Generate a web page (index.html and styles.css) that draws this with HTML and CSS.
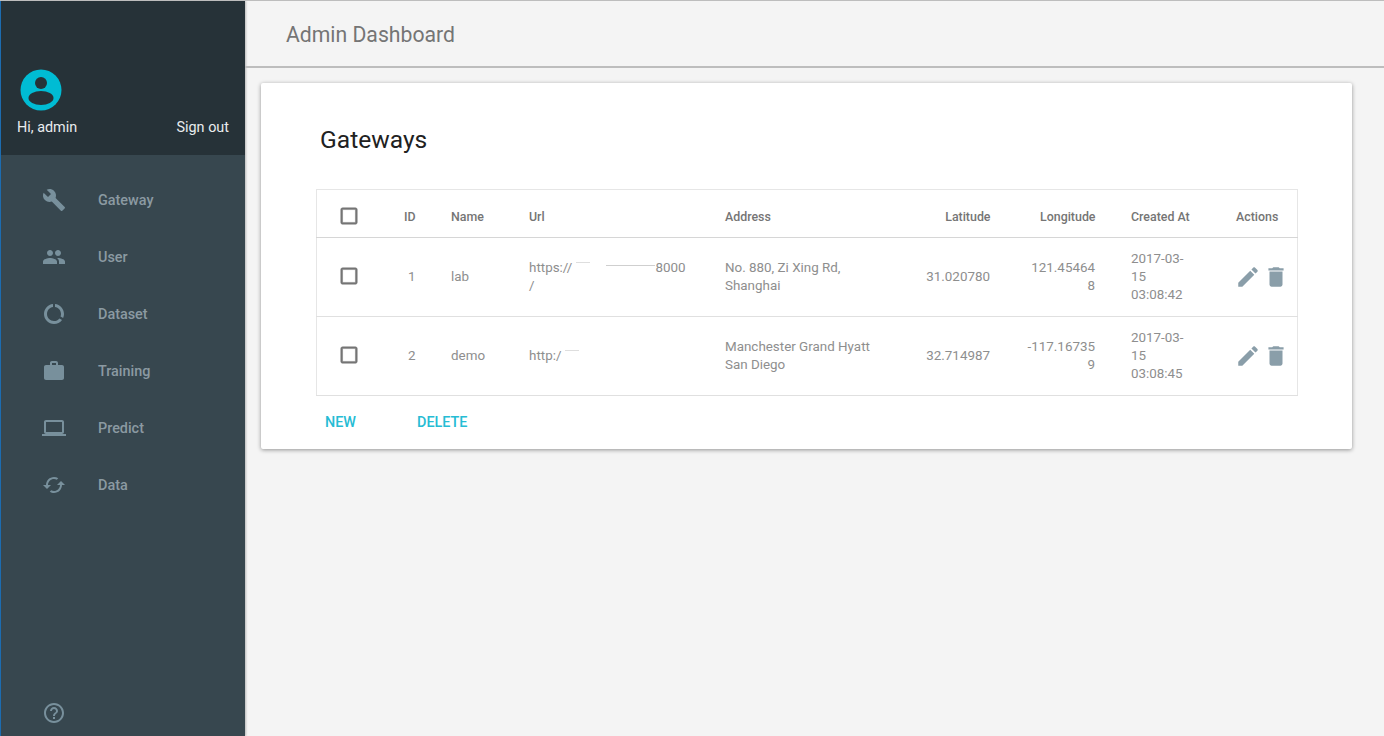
FILE: index.html
```html
<!DOCTYPE html>
<html lang="en">
<head>
    <meta charset="UTF-8">
    <meta name="viewport" content="width=device-width, initial-scale=1.0">
    <title>Admin Dashboard</title>
    <link rel="stylesheet" href="styles.css">
</head>
<body>
    <!-- Sidebar -->
    <aside class="sidebar">
        <div class="profile">
            <svg class="avatar" viewBox="0 0 42 42">
                <circle cx="21" cy="21" r="20.5" fill="#00bcd4"/>
                <circle cx="21" cy="14" r="6" fill="#263238"/>
                <ellipse cx="21" cy="29" rx="12.5" ry="7" fill="#263238"/>
            </svg>
            <div class="profile-row">
                <span>Hi, admin</span>
                <span>Sign out</span>
            </div>
        </div>

        <nav class="nav">
            <a class="nav-item">
                <svg class="nav-icon" viewBox="0 0 24 24"><path d="M22.7 19l-9.1-9.1c.9-2.3.4-5-1.5-6.9-2-2-5-2.4-7.4-1.3L9 6 6 9 1.6 4.7C.4 7.1.9 10.1 2.9 12.1c1.9 1.9 4.6 2.4 6.9 1.5l9.1 9.1c.4.4 1 .4 1.4 0l2.3-2.3c.5-.4.5-1.1.1-1.4z"/></svg>
                <span>Gateway</span>
            </a>
            <a class="nav-item">
                <svg class="nav-icon" viewBox="0 0 24 24"><path d="M16 11c1.66 0 2.99-1.34 2.99-3S17.66 5 16 5c-1.66 0-3 1.34-3 3s1.34 3 3 3zm-8 0c1.66 0 2.99-1.34 2.99-3S9.66 5 8 5C6.34 5 5 6.34 5 8s1.34 3 3 3zm0 2c-2.33 0-7 1.17-7 3.5V19h14v-2.5c0-2.33-4.67-3.5-7-3.5zm8 0c-.29 0-.62.02-.97.05 1.16.84 1.97 1.97 1.97 3.45V19h6v-2.5c0-2.33-4.67-3.5-7-3.5z"/></svg>
                <span>User</span>
            </a>
            <a class="nav-item">
                <svg class="nav-icon" viewBox="0 0 24 24"><path d="M13 2.05v3.03c3.39.49 6 3.39 6 6.92 0 .9-.18 1.75-.48 2.54l2.6 1.53c.56-1.24.88-2.62.88-4.07 0-5.18-3.95-9.45-9-9.95zM12 19c-3.87 0-7-3.13-7-7 0-3.53 2.61-6.43 6-6.92V2.05c-5.06.5-9 4.76-9 9.95 0 5.52 4.47 10 9.99 10 3.31 0 6.24-1.61 8.06-4.09l-2.6-1.53C16.17 17.98 14.21 19 12 19z"/></svg>
                <span>Dataset</span>
            </a>
            <a class="nav-item">
                <svg class="nav-icon" viewBox="0 0 24 24"><path d="M20 6h-4V4c0-1.11-.89-2-2-2h-4c-1.11 0-2 .89-2 2v2H4c-1.11 0-1.99.89-1.99 2L2 19c0 1.11.89 2 2 2h16c1.11 0 2-.89 2-2V8c0-1.11-.89-2-2-2zm-6 0h-4V4h4v2z"/></svg>
                <span>Training</span>
            </a>
            <a class="nav-item">
                <svg class="nav-icon" viewBox="0 0 24 24"><path d="M20 18c1.1 0 1.99-.9 1.99-2L22 6c0-1.1-.9-2-2-2H4c-1.1 0-2 .9-2 2v10c0 1.1.9 2 2 2H0v2h24v-2h-4zM4 6h16v10H4V6z"/></svg>
                <span>Predict</span>
            </a>
            <a class="nav-item">
                <svg class="nav-icon" viewBox="0 0 24 24"><path d="M19 8l-4 4h3c0 3.31-2.69 6-6 6-1.01 0-1.97-.25-2.8-.7l-1.46 1.46C8.97 19.54 10.43 20 12 20c4.42 0 8-3.58 8-8h3l-4-4zM6 12c0-3.31 2.69-6 6-6 1.01 0 1.97.25 2.8.7l1.46-1.46C15.03 4.46 13.57 4 12 4c-4.42 0-8 3.58-8 8H1l4 4 4-4H6z"/></svg>
                <span>Data</span>
            </a>
        </nav>

        <div class="help">
            <svg class="nav-icon" viewBox="0 0 24 24"><path d="M11 18h2v-2h-2v2zm1-16C6.48 2 2 6.48 2 12s4.48 10 10 10 10-4.48 10-10S17.52 2 12 2zm0 18c-4.41 0-8-3.59-8-8s3.59-8 8-8 8 3.59 8 8-3.59 8-8 8zm0-14c-2.21 0-4 1.79-4 4h2c0-1.1.9-2 2-2s2 .9 2 2c0 2-3 1.75-3 5h2c0-2.25 3-2.5 3-5 0-2.21-1.79-4-4-4z"/></svg>
        </div>
    </aside>

    <div class="content">
        <header class="topbar">Admin Dashboard</header>

        <main class="main">
            <section class="card">
                <h2 class="card-title">Gateways</h2>

                <table class="grid">
                    <colgroup>
                        <col class="col-check">
                        <col class="col-id">
                        <col class="col-name">
                        <col class="col-url">
                        <col class="col-address">
                        <col class="col-lat">
                        <col class="col-lng">
                        <col class="col-created">
                        <col class="col-actions">
                    </colgroup>
                    <thead>
                        <tr>
                            <th class="cell-check"><svg class="checkbox" viewBox="0 0 24 24"><path d="M19 5v14H5V5h14m0-2H5c-1.1 0-2 .9-2 2v14c0 1.1.9 2 2 2h14c1.1 0 2-.9 2-2V5c0-1.1-.9-2-2-2z"/></svg></th>
                            <th class="num">ID</th>
                            <th>Name</th>
                            <th>Url</th>
                            <th>Address</th>
                            <th class="num">Latitude</th>
                            <th class="num">Longitude</th>
                            <th>Created At</th>
                            <th>Actions</th>
                        </tr>
                    </thead>
                    <tbody>
                        <tr>
                            <td class="cell-check"><svg class="checkbox" viewBox="0 0 24 24"><path d="M19 5v14H5V5h14m0-2H5c-1.1 0-2 .9-2 2v14c0 1.1.9 2 2 2h14c1.1 0 2-.9 2-2V5c0-1.1-.9-2-2-2z"/></svg></td>
                            <td class="num">1</td>
                            <td>lab</td>
                            <td>https://<span class="smudge"></span><span class="smudge smudge-long"></span>8000<br>/</td>
                            <td>No. 880, Zi Xing Rd, Shanghai</td>
                            <td class="num">31.020780</td>
                            <td class="num wrap">121.454648</td>
                            <td class="cell-date">2017-03-15 03:08:42</td>
                            <td class="cell-actions">
                                <svg class="action-icon" viewBox="0 0 24 24"><path d="M3 17.25V21h3.75L17.81 9.94l-3.75-3.75L3 17.25zM20.71 7.04c.39-.39.39-1.02 0-1.41l-2.34-2.34c-.39-.39-1.02-.39-1.41 0l-1.83 1.83 3.75 3.75 1.83-1.83z"/></svg><svg class="action-icon" viewBox="0 0 24 24"><path d="M6 19c0 1.1.9 2 2 2h8c1.1 0 2-.9 2-2V7H6v12zM19 4h-3.5l-1-1h-5l-1 1H5v2h14V4z"/></svg>
                            </td>
                        </tr>
                        <tr>
                            <td class="cell-check"><svg class="checkbox" viewBox="0 0 24 24"><path d="M19 5v14H5V5h14m0-2H5c-1.1 0-2 .9-2 2v14c0 1.1.9 2 2 2h14c1.1 0 2-.9 2-2V5c0-1.1-.9-2-2-2z"/></svg></td>
                            <td class="num">2</td>
                            <td>demo</td>
                            <td>http:/<span class="smudge"></span></td>
                            <td>Manchester Grand Hyatt San Diego</td>
                            <td class="num">32.714987</td>
                            <td class="num wrap">-117.167359</td>
                            <td class="cell-date">2017-03-15 03:08:45</td>
                            <td class="cell-actions">
                                <svg class="action-icon" viewBox="0 0 24 24"><path d="M3 17.25V21h3.75L17.81 9.94l-3.75-3.75L3 17.25zM20.71 7.04c.39-.39.39-1.02 0-1.41l-2.34-2.34c-.39-.39-1.02-.39-1.41 0l-1.83 1.83 3.75 3.75 1.83-1.83z"/></svg><svg class="action-icon" viewBox="0 0 24 24"><path d="M6 19c0 1.1.9 2 2 2h8c1.1 0 2-.9 2-2V7H6v12zM19 4h-3.5l-1-1h-5l-1 1H5v2h14V4z"/></svg>
                            </td>
                        </tr>
                    </tbody>
                </table>

                <div class="card-actions">
                    <a class="flat-btn">NEW</a>
                    <a class="flat-btn">DELETE</a>
                </div>
            </section>
        </main>
    </div>
</body>
</html>
```

FILE: styles.css
```css
* {
    box-sizing: border-box;
}

html, body {
    height: 100%;
}

body {
    display: flex;
    margin: 0;
    overflow: hidden;
    font-family: Roboto, "Liberation Sans", sans-serif;
    background-color: #f4f4f4;
    border-top: 1px solid #bdbdbd;
}

/* Sidebar */
.sidebar {
    display: flex;
    flex-direction: column;
    flex: none;
    width: 245px;
    background-color: #37474f;
    border-left: 1px solid #1c6cb0;
    box-shadow: 1px 0 2px rgba(0, 0, 0, 0.25);
}

.profile {
    height: 154px;
    padding: 68px 16px 0 16px;
    background-color: #263238;
    color: #e9ecee;
    font-size: 14.4px;
}

.avatar {
    display: block;
    width: 42px;
    height: 42px;
    margin-left: 3px;
}

.profile-row {
    display: flex;
    justify-content: space-between;
    margin-top: 8px;
    line-height: 18px;
}

.nav {
    padding-top: 16px;
}

.nav-item {
    display: flex;
    align-items: center;
    height: 57px;
    padding-left: 41px;
    color: #8b9aa2;
    font-size: 14.4px;
    font-weight: 500;
}

.nav-icon {
    display: block;
    flex: none;
    width: 24px;
    height: 24px;
    fill: #78909c;
}

.nav-item span {
    margin-left: 32px;
    padding-top: 2px;
}

.help {
    margin-top: auto;
    padding: 0 0 11px 41px;
}

/* Header and main area */
.content {
    flex: 1;
    min-width: 0;
}

.topbar {
    height: 67px;
    padding: 0 0 0 41px;
    line-height: 67px;
    font-size: 21.2px;
    color: #757575;
    border-bottom: 2px solid #bdbdbd;
}

.main {
    padding: 15px 32px 0 16px;
}

.card {
    height: 366px;
    padding: 42px 55px 0 55px;
    background-color: #fff;
    border-radius: 2px;
    box-shadow: 0 1px 4px rgba(0, 0, 0, 0.4);
}

.card-title {
    margin: 0 0 34px 4px;
    font-size: 24.6px;
    font-weight: 400;
    line-height: 30px;
    color: #212121;
}

/* Table */
.grid {
    width: 100%;
    table-layout: fixed;
    border-collapse: collapse;
    border: 1px solid #e6e6e6;
}

.col-check { width: 74px; }
.col-id { width: 43px; }
.col-name { width: 78px; }
.col-url { width: 196px; }
.col-address { width: 195px; }
.col-lat { width: 106px; }
.col-lng { width: 105px; }
.col-created { width: 105px; }
.col-actions { width: 79px; }

.grid th, .grid td {
    padding: 0 18px 0 17.5px;
    text-align: left;
    line-height: 18px;
}

.grid th {
    height: 48px;
    padding-top: 6px;
    font-size: 12.4px;
    font-weight: 500;
    color: #757575;
    border-bottom: 1px solid #d6d6d6;
}

.grid td {
    height: 79px;
    font-size: 13.4px;
    color: #8e8e8e;
    border-bottom: 1px solid #e0e0e0;
}

.grid .num {
    padding-right: 18.5px;
    text-align: right;
}

.grid th.num {
    padding-left: 0;
    padding-right: 18px;
}

.wrap {
    word-break: break-all;
}

.grid .cell-date {
    padding-right: 24px;
}

.grid .cell-check {
    padding: 0 0 2px 21px;
}

.checkbox {
    display: block;
    width: 22px;
    height: 22px;
    fill: #757575;
    stroke: #757575;
    stroke-width: 0.5;
}

.grid th.cell-check {
    padding: 5px 0 0 21px;
}

.grid .cell-actions {
    padding: 0 0 0 16.5px;
}

.action-icon {
    width: 26px;
    height: 26px;
    margin-right: 2px;
    vertical-align: middle;
    fill: #8a9ea9;
}

/* Redacted part of the urls */
.smudge {
    display: inline-block;
    width: 14px;
    height: 1px;
    margin-left: 4px;
    vertical-align: 9px;
    background-color: #dedede;
}

.smudge-long {
    width: 49px;
    margin-left: 16px;
    vertical-align: 6px;
    background-color: #cfcfcf;
}

/* Buttons under the table */
.card-actions {
    display: flex;
    gap: 61px;
    padding: 18px 0 0 9px;
}

.flat-btn {
    font-size: 14.4px;
    font-weight: 500;
    line-height: 18px;
    color: #26bcd4;
}
```
